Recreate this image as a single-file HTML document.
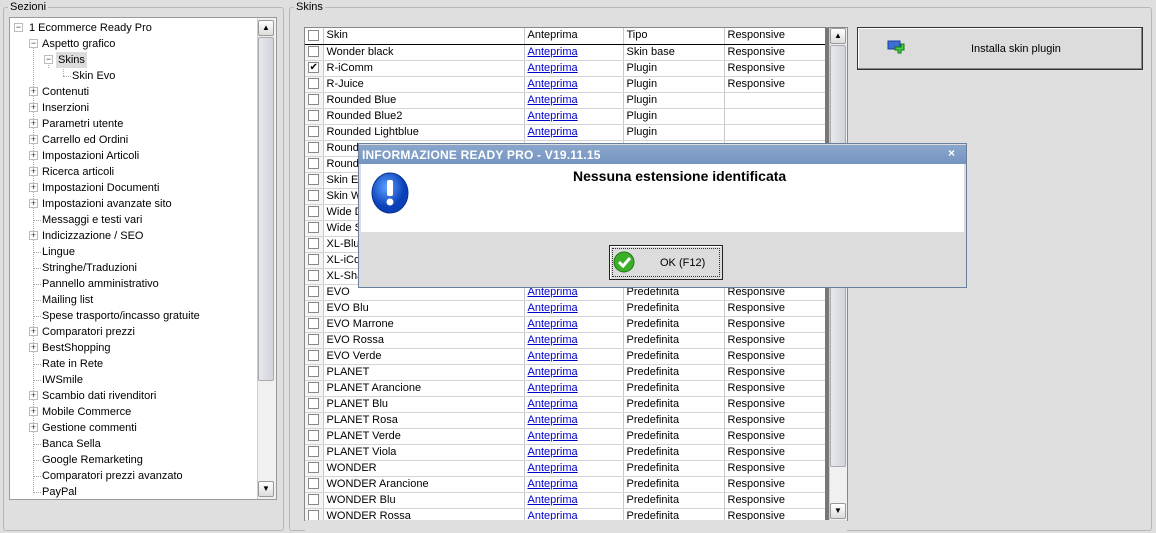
<!DOCTYPE html>
<html><head><meta charset="utf-8">
<style>
*{box-sizing:border-box;margin:0;padding:0}
body{width:1156px;height:533px;background:#dfdfdf;font-family:"Liberation Sans",sans-serif;font-size:11px;color:#000;position:relative;overflow:hidden}
.abs{position:absolute}
.gb{position:absolute;border:1px solid #b8b8b8;border-radius:3px}
.gbl{position:absolute;background:#dfdfdf;padding:0 2px;font-size:11px;line-height:12px}
.tree{left:9px;top:17px;width:268px;height:483px;background:#fff;border:1px solid #9a9a9a;overflow:hidden}
.ti{position:absolute;height:16px;line-height:16px;white-space:nowrap}
.pm{position:absolute;width:9px;height:9px;font-size:9px;line-height:7px;text-align:center;color:#333;background:#fff;border:1px solid #bbb}
.vl{position:absolute;border-left:1px dotted #aaa}
.hl{position:absolute;border-top:1px dotted #aaa;width:8px}
.sb{position:absolute;background:#f0f0f0;border-left:1px solid #ccc}
.sbtn{position:absolute;width:16px;height:16px;background:linear-gradient(#fff,#dcdcdc);border:1px solid #999;border-radius:2px;font-size:8px;text-align:center;line-height:14px}
.thumb{position:absolute;background:linear-gradient(90deg,#e8e8ec,#d2d4dc);border:1px solid #aaa;border-radius:2px}
table{border-collapse:collapse;position:absolute;left:305px;top:28px;table-layout:fixed}
td{height:16px;border-right:1px solid #c8c8c8;border-bottom:1px solid #d4d4d4;padding:0 3px;white-space:nowrap;overflow:hidden;line-height:15px}
tr.h td{border-bottom:1px solid #000;background:#fff}
td.c{padding:0;text-align:center;background:#f4f4f4}
.cb{display:inline-block;width:11px;height:11px;border:1px solid #888;background:#fff;vertical-align:middle;font-size:10px;line-height:9px}
a{color:#00c;text-decoration:underline}
</style></head><body>
<div class="gb" style="left:3px;top:7px;width:281px;height:524px"></div>
<div class="gbl" style="left:8px;top:1px">Sezioni</div>
<div class="abs tree">
<div class="vl" style="left:23px;top:26px;height:449px"></div>
<div class="vl" style="left:38px;top:42px;height:8px"></div>
<div class="vl" style="left:53px;top:42px;height:16px"></div>
<div class="hl" style="left:53px;top:58px"></div>
<div class="hl" style="left:23px;top:202px"></div><div class="hl" style="left:23px;top:234px"></div><div class="hl" style="left:23px;top:250px"></div><div class="hl" style="left:23px;top:266px"></div><div class="hl" style="left:23px;top:282px"></div><div class="hl" style="left:23px;top:298px"></div><div class="hl" style="left:23px;top:346px"></div><div class="hl" style="left:23px;top:362px"></div><div class="hl" style="left:23px;top:426px"></div><div class="hl" style="left:23px;top:442px"></div><div class="hl" style="left:23px;top:458px"></div><div class="hl" style="left:23px;top:474px"></div>
<div class="ti" style="left:19px;top:2px">1 Ecommerce Ready Pro</div><div class="pm" style="left:4px;top:5px">−</div>
<div class="ti" style="left:32px;top:18px">Aspetto grafico</div><div class="pm" style="left:19px;top:21px">−</div>
<div class="ti" style="left:46px;top:34px;background:#dcdcdc;padding:0 2px">Skins</div><div class="pm" style="left:34px;top:37px">−</div>
<div class="ti" style="left:62px;top:50px">Skin Evo</div>
<div class="ti" style="left:32px;top:66px">Contenuti</div><div class="pm" style="left:19px;top:69px">+</div>
<div class="ti" style="left:32px;top:82px">Inserzioni</div><div class="pm" style="left:19px;top:85px">+</div>
<div class="ti" style="left:32px;top:98px">Parametri utente</div><div class="pm" style="left:19px;top:101px">+</div>
<div class="ti" style="left:32px;top:114px">Carrello ed Ordini</div><div class="pm" style="left:19px;top:117px">+</div>
<div class="ti" style="left:32px;top:130px">Impostazioni Articoli</div><div class="pm" style="left:19px;top:133px">+</div>
<div class="ti" style="left:32px;top:146px">Ricerca articoli</div><div class="pm" style="left:19px;top:149px">+</div>
<div class="ti" style="left:32px;top:162px">Impostazioni Documenti</div><div class="pm" style="left:19px;top:165px">+</div>
<div class="ti" style="left:32px;top:178px">Impostazioni avanzate sito</div><div class="pm" style="left:19px;top:181px">+</div>
<div class="ti" style="left:32px;top:194px">Messaggi e testi vari</div>
<div class="ti" style="left:32px;top:210px">Indicizzazione / SEO</div><div class="pm" style="left:19px;top:213px">+</div>
<div class="ti" style="left:32px;top:226px">Lingue</div>
<div class="ti" style="left:32px;top:242px">Stringhe/Traduzioni</div>
<div class="ti" style="left:32px;top:258px">Pannello amministrativo</div>
<div class="ti" style="left:32px;top:274px">Mailing list</div>
<div class="ti" style="left:32px;top:290px">Spese trasporto/incasso gratuite</div>
<div class="ti" style="left:32px;top:306px">Comparatori prezzi</div><div class="pm" style="left:19px;top:309px">+</div>
<div class="ti" style="left:32px;top:322px">BestShopping</div><div class="pm" style="left:19px;top:325px">+</div>
<div class="ti" style="left:32px;top:338px">Rate in Rete</div>
<div class="ti" style="left:32px;top:354px">IWSmile</div>
<div class="ti" style="left:32px;top:370px">Scambio dati rivenditori</div><div class="pm" style="left:19px;top:373px">+</div>
<div class="ti" style="left:32px;top:386px">Mobile Commerce</div><div class="pm" style="left:19px;top:389px">+</div>
<div class="ti" style="left:32px;top:402px">Gestione commenti</div><div class="pm" style="left:19px;top:405px">+</div>
<div class="ti" style="left:32px;top:418px">Banca Sella</div>
<div class="ti" style="left:32px;top:434px">Google Remarketing</div>
<div class="ti" style="left:32px;top:450px">Comparatori prezzi avanzato</div>
<div class="ti" style="left:32px;top:466px">PayPal</div>
<div class="sb" style="left:247px;top:0;width:19px;height:481px"></div>
<div class="sbtn" style="left:248px;top:2px">▲</div>
<div class="thumb" style="left:248px;top:19px;width:16px;height:344px"></div>
<div class="sbtn" style="left:248px;top:463px">▼</div>
</div>

<div class="gb" style="left:289px;top:7px;width:863px;height:524px"></div>
<div class="gbl" style="left:294px;top:1px">Skins</div>
<div class="abs" style="left:304px;top:27px;width:544px;height:494px;border:1px solid #888;background:#fff"></div>
<table>
<colgroup><col style="width:18px"><col style="width:201px"><col style="width:99px"><col style="width:101px"><col style="width:101px"></colgroup>
<tr class="h"><td class="c" style="background:#fff"><span class="cb"></span></td><td>Skin</td><td>Anteprima</td><td>Tipo</td><td>Responsive</td></tr>
<tr><td class="c"><span class="cb"></span></td><td>Wonder black</td><td><a>Anteprima</a></td><td>Skin base</td><td>Responsive</td></tr>
<tr><td class="c"><span class="cb">✔</span></td><td>R-iComm</td><td><a>Anteprima</a></td><td>Plugin</td><td>Responsive</td></tr>
<tr><td class="c"><span class="cb"></span></td><td>R-Juice</td><td><a>Anteprima</a></td><td>Plugin</td><td>Responsive</td></tr>
<tr><td class="c"><span class="cb"></span></td><td>Rounded Blue</td><td><a>Anteprima</a></td><td>Plugin</td><td></td></tr>
<tr><td class="c"><span class="cb"></span></td><td>Rounded Blue2</td><td><a>Anteprima</a></td><td>Plugin</td><td></td></tr>
<tr><td class="c"><span class="cb"></span></td><td>Rounded Lightblue</td><td><a>Anteprima</a></td><td>Plugin</td><td></td></tr>
<tr><td class="c"><span class="cb"></span></td><td>Rounded</td><td></td><td></td><td></td></tr>
<tr><td class="c"><span class="cb"></span></td><td>Rounded</td><td></td><td></td><td></td></tr>
<tr><td class="c"><span class="cb"></span></td><td>Skin Evo</td><td></td><td></td><td></td></tr>
<tr><td class="c"><span class="cb"></span></td><td>Skin W</td><td></td><td></td><td></td></tr>
<tr><td class="c"><span class="cb"></span></td><td>Wide D</td><td></td><td></td><td></td></tr>
<tr><td class="c"><span class="cb"></span></td><td>Wide S</td><td></td><td></td><td></td></tr>
<tr><td class="c"><span class="cb"></span></td><td>XL-Blue</td><td></td><td></td><td></td></tr>
<tr><td class="c"><span class="cb"></span></td><td>XL-iCom</td><td></td><td></td><td></td></tr>
<tr><td class="c"><span class="cb"></span></td><td>XL-Sha</td><td></td><td></td><td></td></tr>
<tr><td class="c"><span class="cb"></span></td><td>EVO</td><td><a>Anteprima</a></td><td>Predefinita</td><td>Responsive</td></tr>
<tr><td class="c"><span class="cb"></span></td><td>EVO Blu</td><td><a>Anteprima</a></td><td>Predefinita</td><td>Responsive</td></tr>
<tr><td class="c"><span class="cb"></span></td><td>EVO Marrone</td><td><a>Anteprima</a></td><td>Predefinita</td><td>Responsive</td></tr>
<tr><td class="c"><span class="cb"></span></td><td>EVO Rossa</td><td><a>Anteprima</a></td><td>Predefinita</td><td>Responsive</td></tr>
<tr><td class="c"><span class="cb"></span></td><td>EVO Verde</td><td><a>Anteprima</a></td><td>Predefinita</td><td>Responsive</td></tr>
<tr><td class="c"><span class="cb"></span></td><td>PLANET</td><td><a>Anteprima</a></td><td>Predefinita</td><td>Responsive</td></tr>
<tr><td class="c"><span class="cb"></span></td><td>PLANET Arancione</td><td><a>Anteprima</a></td><td>Predefinita</td><td>Responsive</td></tr>
<tr><td class="c"><span class="cb"></span></td><td>PLANET Blu</td><td><a>Anteprima</a></td><td>Predefinita</td><td>Responsive</td></tr>
<tr><td class="c"><span class="cb"></span></td><td>PLANET Rosa</td><td><a>Anteprima</a></td><td>Predefinita</td><td>Responsive</td></tr>
<tr><td class="c"><span class="cb"></span></td><td>PLANET Verde</td><td><a>Anteprima</a></td><td>Predefinita</td><td>Responsive</td></tr>
<tr><td class="c"><span class="cb"></span></td><td>PLANET Viola</td><td><a>Anteprima</a></td><td>Predefinita</td><td>Responsive</td></tr>
<tr><td class="c"><span class="cb"></span></td><td>WONDER</td><td><a>Anteprima</a></td><td>Predefinita</td><td>Responsive</td></tr>
<tr><td class="c"><span class="cb"></span></td><td>WONDER Arancione</td><td><a>Anteprima</a></td><td>Predefinita</td><td>Responsive</td></tr>
<tr><td class="c"><span class="cb"></span></td><td>WONDER Blu</td><td><a>Anteprima</a></td><td>Predefinita</td><td>Responsive</td></tr>
<tr><td class="c"><span class="cb"></span></td><td>WONDER Rossa</td><td><a>Anteprima</a></td><td>Predefinita</td><td>Responsive</td></tr>
</table>
<div class="abs" style="left:305px;top:520px;width:542px;height:13px;background:#dfdfdf"></div>
<div class="abs" style="left:825px;top:28px;width:4px;height:492px;background:#777"></div>
<div class="sb" style="left:829px;top:28px;width:18px;height:492px"></div>
<div class="sbtn" style="left:830px;top:28px">▲</div>
<div class="thumb" style="left:830px;top:45px;width:16px;height:422px"></div>
<div class="sbtn" style="left:830px;top:503px">▼</div>

<div class="abs" style="left:857px;top:27px;width:286px;height:43px;background:#dcdcdc;border:1px solid #333;box-shadow:inset -1px -1px 0 #888,inset 1px 1px 0 #fff"></div>
<svg class="abs" style="left:887px;top:40px" width="20" height="16"><rect x="1" y="1" width="12" height="8" fill="#3a6fd8" stroke="#1d3f99"/><path d="M11 6h4v-3h3v3h0v3h-3v3h-3v-3h-3v-3z" fill="#44cc44" stroke="#117711" transform="translate(-1,1)"/></svg>
<div class="abs" style="left:971px;top:43px;font-size:11px">Installa skin plugin</div>

<div class="abs" style="left:358px;top:143px;width:609px;height:145px;background:#dcdcdc;border:1px solid #6a7f9c"></div>
<div class="abs" style="left:359px;top:145px;width:607px;height:19px;background:linear-gradient(#8aa6cc,#7494c0)"></div>
<div class="abs" style="left:362px;top:148px;color:#fff;font-weight:bold;font-size:12px;letter-spacing:0.2px">INFORMAZIONE READY PRO - V19.11.15</div>
<div class="abs" style="left:948px;top:146px;color:#fff;font-weight:bold;font-size:12px">×</div>
<div class="abs" style="left:361px;top:164px;width:603px;height:68px;background:#fff"></div>
<svg class="abs" style="left:369px;top:172px" width="44" height="44"><defs><radialGradient id="g" cx="40%" cy="35%"><stop offset="0" stop-color="#5aa0ff"/><stop offset="1" stop-color="#0a40b8"/></radialGradient></defs><ellipse cx="21" cy="21" rx="18" ry="20" fill="url(#g)" stroke="#0a3090"/><rect x="18" y="8" width="6" height="16" rx="2" fill="#fff"/><circle cx="21" cy="30" r="3.5" fill="#fff"/></svg>
<div class="abs" style="left:573px;top:168px;font-weight:bold;font-size:14px">Nessuna estensione identificata</div>
<div class="abs" style="left:609px;top:245px;width:114px;height:35px;background:#dcdcdc;border:1px solid #222;box-shadow:inset 1px 1px 0 #fff"></div>
<div class="abs" style="left:612px;top:248px;width:108px;height:29px;border:1px dotted #333"></div>
<svg class="abs" style="left:613px;top:250px" width="24" height="24"><circle cx="11" cy="12" r="10" fill="#3cae2a" stroke="#1e7a14"/><path d="M6 12l4 4 7-8" fill="none" stroke="#fff" stroke-width="3"/></svg>
<div class="abs" style="left:660px;top:257px;font-size:11px">OK (F12)</div>
</body></html>
